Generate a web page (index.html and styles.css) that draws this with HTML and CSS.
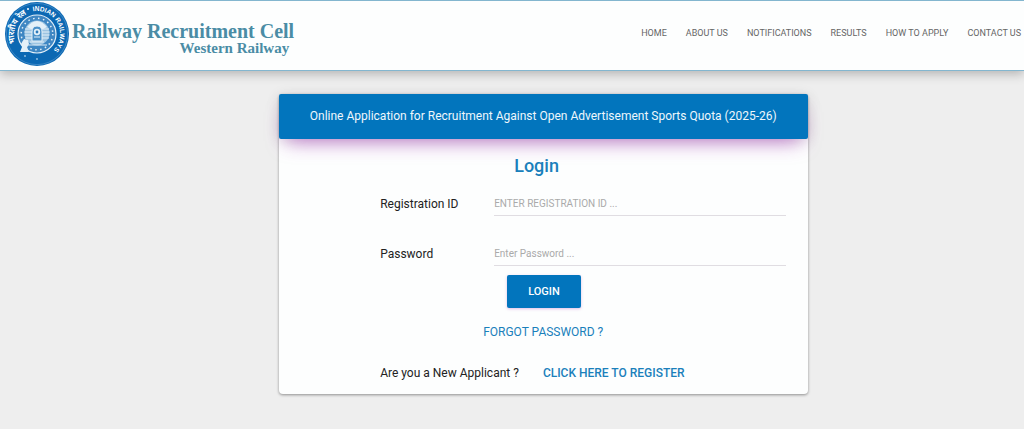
FILE: index.html
```
<!DOCTYPE html>
<html lang="en">
<head>
  <meta charset="UTF-8">
  <meta name="viewport" content="width=device-width, initial-scale=1">
  <title>Railway Recruitment Cell - Western Railway</title>
  <link rel="stylesheet" href="styles.css">
</head>
<body>
  <header class="navbar">
    <a class="brand" href="#">
      <svg class="brand-logo" viewBox="0 0 64 64" role="img" aria-label="Indian Railways">
        <defs>
          <path id="arc-right" d="M 28 9.3 A 23 23 0 0 1 44 51.6"/>
          <path id="arc-left" d="M 10.7 40.6 A 23 23 0 0 1 27 9.5"/>
        </defs>
        <circle cx="32" cy="32" r="32" fill="#0b68b3"/>
        <circle cx="32" cy="32" r="30.6" fill="none" stroke="#5b9bd0" stroke-width="0.6"/>
        <circle cx="32" cy="32" r="19" fill="#3f87c3" stroke="#e4f0f8" stroke-width="1.2"/>
        <circle cx="32" cy="32" r="15.8" fill="none" stroke="#e4f0f8" stroke-width="1.5" stroke-dasharray="1.5 3.5"/>
        <circle cx="32" cy="31" r="12.5" fill="#9cc4e2"/>
        <path d="M20 27h24M19.5 30h25M19.5 33h25M20 36h24" stroke="#e4f0f8" stroke-width="1"/>
        <path d="M22 25q10-12 20 0l-4 2H26z" fill="#e4f0f8"/>
        <path d="M27 39V30q0-6 5-6t5 6v9z" fill="#4a90c8" stroke="#e4f0f8"/>
        <circle cx="32" cy="30" r="3.2" fill="#e4f0f8"/>
        <circle cx="32" cy="30" r="1.4" fill="#2b79ba"/>
        <path d="M29 35h6M25 40h14M22 43h20" stroke="#e4f0f8" stroke-width="1.2"/>
        <path d="M15 50l2-5-1-3 3-5 4 1 1 4-2 3 2 5z" fill="#e4f0f8"/>
        <circle cx="23" cy="7" r="1" fill="#fff"/>
        <circle cx="20" cy="54" r="0.9" fill="#9cc4e2"/>
        <circle cx="32" cy="57" r="0.9" fill="#9cc4e2"/>
        <text class="logo-text"><textPath href="#arc-right">INDIAN RAILWAYS</textPath></text>
        <text class="logo-text logo-text-hi"><textPath href="#arc-left">भारतीय रेल</textPath></text>
      </svg>
      <span class="brand-text">
        <span class="brand-name">Railway Recruitment Cell</span>
        <span class="brand-zone">Western Railway</span>
      </span>
    </a>
    <nav class="nav-links">
      <a href="#">HOME</a>
      <a href="#">ABOUT US</a>
      <a href="#">NOTIFICATIONS</a>
      <a href="#">RESULTS</a>
      <a href="#">HOW TO APPLY</a>
      <a href="#">CONTACT US</a>
    </nav>
  </header>

  <main class="card">
    <div class="card-header">Online Application for Recruitment Against Open Advertisement Sports Quota (2025-26)</div>
    <form class="login-form">
      <h1>Login</h1>
      <div class="form-row">
        <label for="regid">Registration ID</label>
        <input id="regid" type="text" placeholder="ENTER REGISTRATION ID ...">
      </div>
      <div class="form-row">
        <label for="password">Password</label>
        <input id="password" type="password" placeholder="Enter Password ...">
      </div>
      <button class="btn-login" type="submit">LOGIN</button>
      <a class="forgot" href="#">FORGOT PASSWORD ?</a>
      <div class="register-row">
        <span>Are you a New Applicant ?</span>
        <a href="#">CLICK HERE TO REGISTER</a>
      </div>
    </form>
  </main>
</body>
</html>
```
FILE: styles.css
```
* {
  box-sizing: border-box;
}
body {
  margin: 0;
  min-height: 100vh;
  background: #eee;
  color: #222;
  font-family: Roboto, Arial, sans-serif;
  font-size: 12px;
}
a {
  color: #1a80bb;
  text-decoration: none;
}
.navbar {
  display: flex;
  align-items: center;
  justify-content: space-between;
  padding: 1px 3px 4px 5px;
  background: #fdfefe;
  border-top: 1px solid #83b6cf;
  border-bottom: 1px solid #83b6cf;
  box-shadow: 0 3px 10px rgba(0, 0, 0, 0.25);
}
.brand {
  display: flex;
  align-items: center;
  gap: 3px;
}
.brand-logo {
  width: 64px;
  height: 64px;
}
.logo-text {
  fill: #fff;
  font-family: "Liberation Sans", sans-serif;
  font-size: 6.5px;
  font-weight: bold;
}
.logo-text-hi {
  font-size: 8px;
}
.brand-text {
  display: flex;
  flex-direction: column;
  align-items: flex-end;
  padding: 9px 3px 0 0;
  color: #4a8ca5;
  font-family: "Liberation Serif", "Times New Roman", serif;
  font-weight: bold;
}
.brand-name {
  font-size: 20px;
  line-height: 19px;
}
.brand-zone {
  padding-right: 5px;
  font-size: 15px;
  line-height: 15px;
}
.nav-links {
  display: flex;
  gap: 19px;
  padding-bottom: 3px;
}
.nav-links a {
  color: #666;
  font-size: 9px;
}
.card {
  width: 51.7%;
  margin: 23px 0 0 27.2%;
  background: #fdfefe;
  border-radius: 4px;
  box-shadow: 0 1px 3px rgba(0, 0, 0, 0.4);
}
.card-header {
  padding: 14px;
  background: #0275bd;
  border-radius: 2px;
  box-shadow: 0 10px 20px -8px rgba(156, 39, 176, 0.6), 0 2px 14px rgba(0, 0, 0, 0.12);
  color: #eef7fc;
  line-height: 17px;
  text-align: center;
}
.login-form {
  display: flex;
  flex-direction: column;
  padding: 16px 22px 12px 19.2%;
}
h1 {
  align-self: flex-start;
  margin: 0 0 15px 134px;
  color: #1a80bb;
  font-size: 18px;
  font-weight: 500;
  line-height: 22px;
}
.form-row {
  display: flex;
  margin-bottom: 26px;
}
.form-row label {
  width: 114px;
  line-height: 24px;
}
.form-row input {
  flex: 1;
  min-width: 0;
  height: 24px;
  padding: 0;
  background: none;
  border: none;
  border-bottom: 1px solid #e0dde2;
  font-family: inherit;
  font-size: 10px;
}
.form-row input:focus {
  border-bottom-color: #0275bd;
  outline: none;
}
.form-row input::placeholder {
  color: #aaa;
}
.btn-login {
  align-self: flex-start;
  margin: -17px 0 0 127px;
  padding: 8px 21px;
  background: #0275bd;
  border: none;
  border-radius: 2px;
  box-shadow: 0 1px 3px rgba(156, 39, 176, 0.3);
  color: #fff;
  cursor: pointer;
  font-family: inherit;
  font-size: 11px;
  font-weight: 500;
  line-height: 17px;
}
.forgot {
  align-self: flex-start;
  margin: 16px 0 24px 103px;
  line-height: 16px;
}
.register-row {
  display: flex;
  gap: 24px;
  line-height: 18px;
}
.register-row a {
  font-weight: 500;
}
```
